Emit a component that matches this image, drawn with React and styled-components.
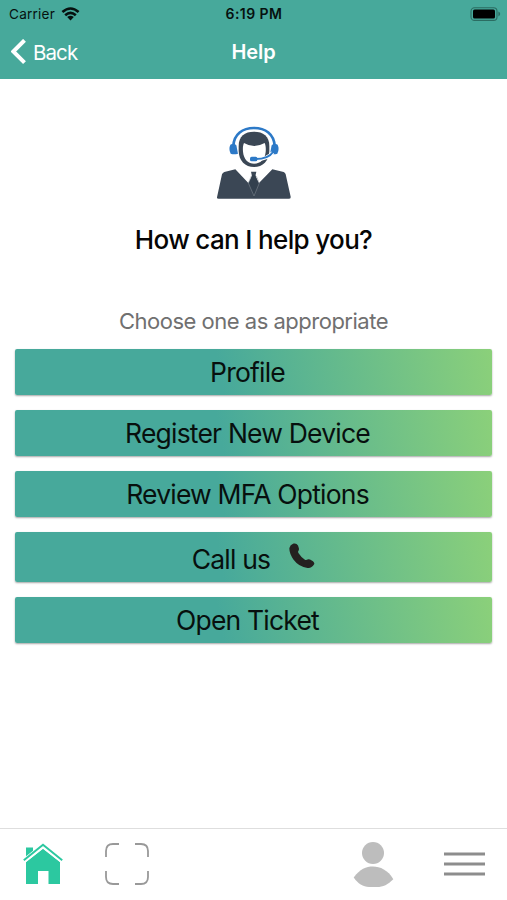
import React from 'react'
import styled, { createGlobalStyle } from 'styled-components'

const GlobalStyle = createGlobalStyle`
  * {
    box-sizing: border-box;
  }

  body {
    margin: 0;
    background: #fff;
    font-family: Inter, "Liberation Sans", sans-serif;
  }
`

const Screen = styled.div`
  display: flex;
  flex-direction: column;
  width: 507px;
  height: 900px;
  overflow: hidden;
`

const Header = styled.header`
  height: 79px;
  background: #47a99b;
`

const StatusBar = styled.div`
  display: grid;
  grid-template-columns: 1fr auto 1fr;
  align-items: center;
  height: 27px;
  padding: 0 6px 0 9px;
  color: #06110f;
  font-size: 13.6px;
`

const Carrier = styled.div`
  display: flex;
  align-items: center;
  gap: 6px;
  letter-spacing: 0.2px;
`

const Clock = styled.div`
  padding-right: 2px;
  font-size: 14px;
  font-weight: 600;
  letter-spacing: 0.45px;
`

const Battery = styled.svg`
  justify-self: end;
`

const NavBar = styled.nav`
  display: grid;
  grid-template-columns: 1fr auto 1fr;
  align-items: center;
  height: 50px;
  padding: 0 11px;
  color: #fff;
`

const BackButton = styled.a`
  display: flex;
  align-items: center;
  gap: 6px;
  height: 26px;
  font-size: 20.5px;
  letter-spacing: -0.9px;
`

const Title = styled.h1`
  margin: 0;
  font-size: 20px;
  font-weight: 600;
  letter-spacing: -0.1px;
`

const Main = styled.main`
  flex: 1;
  display: flex;
  flex-direction: column;
  align-items: center;
  padding: 47px 15px 0;
`

const Question = styled.h2`
  margin: 23px 0 0;
  color: #050505;
  font-size: 26px;
  font-weight: 450;
  line-height: 34px;
  letter-spacing: -0.65px;
`

const Hint = styled.p`
  margin: 50px 0 0;
  color: #707070;
  font-size: 22px;
  line-height: 28px;
  letter-spacing: -0.5px;
`

const Options = styled.div`
  display: flex;
  flex-direction: column;
  gap: 15px;
  width: 477px;
  margin-top: 14px;
`

const Option = styled.button`
  display: flex;
  align-items: center;
  justify-content: center;
  gap: 19px;
  height: ${props => props.$tall ? 50 : 46}px;
  padding: ${props => props.$tall ? '4px 0 0' : '0 12px 0 0'};
  border: 0;
  border-radius: 2px;
  background: linear-gradient(80deg, #47a99b 0%, #47a99b 43%, #8bd07a 100%);
  box-shadow: 0 1px 2px rgba(0, 0, 0, 0.35);
  color: #07100e;
  font-family: inherit;
  font-size: 26.5px;
  letter-spacing: ${props => props.$spacing || '-0.8px'};
`

const PhoneIcon = styled.svg`
  margin-top: -7px;
`

const TabBar = styled.footer`
  display: flex;
  align-items: center;
  height: 72px;
  padding: 0 22px 2px;
  border-top: 1px solid #dedede;
`

const Tab = styled.a`
  display: flex;
  margin-left: ${props => props.$left || 0}px;
`

function Agent() {
  return (
    <svg width="76" height="74" viewBox="66 48 228 222">
      <path d="M69 262L84 193Q86 188 91 186L124 178L163 219L174 199L171 185H187L184 199L195 219L235 178L269 186Q274 188 275 193L290 260Q291 266 284 266H74Q68 266 69 262Z" fill="#3b4755" />
      <path d="M174 196H184L194 221L180 262L165 221Z" fill="#33404e" />
      <path d="M180 258L163 219L172 198M180 258L196 219L187 198" fill="none" stroke="#8b939b" strokeWidth="1.5" />
      <path d="M134 108C134 78 152 65 180 65S226 78 226 108V122C226 152 206 171 180 171S134 152 134 122Z" fill="#3b4755" />
      <path d="M147 125C146 112 147 106 150 99Q180 117 212 99C215 106 216 112 215 126C213 148 199 161 181 161S149 148 147 125Z" fill="#fff" />
      <path d="M118 108C120 72 146 54 180 54S240 72 242 108" fill="none" stroke="#2c79c7" strokeWidth="8" />
      <path d="M109 104Q121 98 127 106L132 131Q120 135 110 131Q103 117 109 104Z" fill="#2c79c7" />
      <path d="M251 104Q239 98 233 106L228 131Q240 135 250 131Q257 117 251 104Z" fill="#2c79c7" />
      <path d="M236 128Q222 148 184 148" fill="none" stroke="#fff" strokeWidth="11" />
      <path d="M237 126Q224 147 184 147" fill="none" stroke="#2c79c7" strokeWidth="5.5" />
      <rect x="168" y="140" width="22" height="14" rx="5" fill="#2c79c7" />
    </svg>
  )
}

export default function App() {
  return (
    <>
      <GlobalStyle />
      <Screen>
        <Header>
          <StatusBar>
            <Carrier>
              Carrier
              <svg width="19" height="14" viewBox="0 0 19 14">
                <path d="M1.4 5Q9.5-2 17.6 5M4.2 8.2Q9.5 3.4 14.8 8.2" fill="none" stroke="#06110f" strokeWidth="2.6" />
                <path d="M6.2 10Q9.5 7.4 12.8 10L9.5 13.5Z" fill="#06110f" />
              </svg>
            </Carrier>
            <Clock>6:19 PM</Clock>
            <Battery width="31" height="14" viewBox="0 0 31 14">
              <rect x="1" y=".8" width="26" height="12.6" rx="3.5" fill="none" stroke="#2b6c62" strokeWidth="1.1" />
              <rect x="3" y="2.6" width="22" height="9" rx="1.6" fill="#000" />
              <path d="M28.4 4.6Q30.2 5.5 30.2 7T28.4 9.4Z" fill="#2b6c62" />
            </Battery>
          </StatusBar>
          <NavBar>
            <BackButton>
              <svg width="16" height="26" viewBox="0 0 16 26">
                <path d="M13.5 1.3L2.3 12.5L13.5 23.7" fill="none" stroke="#fff" strokeWidth="4" />
              </svg>
              Back
            </BackButton>
            <Title>Help</Title>
          </NavBar>
        </Header>

        <Main>
          <Agent />
          <Question>How can I help you?</Question>
          <Hint>Choose one as appropriate</Hint>
          <Options>
            <Option>Profile</Option>
            <Option>Register New Device</Option>
            <Option $spacing="-0.8px">Review MFA Options</Option>
            <Option $tall>
              Call us
              <PhoneIcon width="26" height="26" viewBox="0 0 26 26">
                <path d="M4.5.6Q7.4-.2 9 2.5L9.8 5Q10.3 7 9.2 8.2Q8.8 9 9.6 10.2Q11.8 13.8 15.6 16.4Q16.8 17.2 17.8 16.8Q19 15.8 21 16.6L24 18.2Q26 20 25 21.6Q22.5 25.6 18.5 25Q10 24 4.4 16.5Q0 10 .4 5Q1 2 4.5.6Z" fill="#24201f" />
              </PhoneIcon>
            </Option>
            <Option>Open Ticket</Option>
          </Options>
        </Main>

        <TabBar>
          <Tab>
            <svg width="42" height="42" viewBox="0 0 42 42">
              <path d="M4 4.5H11V9L4 15Z" fill="#2cc8a0" />
              <path d="M4 19L21 5.8L38 19V41H26.5V28H16V41H4Z" fill="#2cc8a0" />
              <path d="M2 17.8L21 2.8L40 17.8" fill="none" stroke="#fff" strokeWidth="4.6" />
              <path d="M1.8 17.2L21 1.8L40.2 17.2" fill="none" stroke="#2cc8a0" strokeWidth="2" />
            </svg>
          </Tab>
          <Tab $left={40}>
            <svg width="46" height="42" viewBox="0 0 46 42">
              <path d="M2 14V8Q2 1 9 1H15M31 1H37Q44 1 44 8V14M44 28V34Q44 41 37 41H31M15 41H9Q2 41 2 34V28" fill="none" stroke="#999" strokeWidth="1.8" />
            </svg>
          </Tab>
          <Tab $left={203}>
            <svg width="41" height="46" viewBox="0 0 41 46">
              <circle cx="20" cy="12" r="11" fill="#bdbdbd" />
              <path d="M.7 36.5C7 28 13 25.5 20 25.5S35 29 40.3 38.2C35 43.5 30 46 24 46H16C10 46 5 42.5.7 36.5Z" fill="#bdbdbd" />
            </svg>
          </Tab>
          <Tab $left={50}>
            <svg width="41" height="26" viewBox="0 0 41 26">
              <path d="M0 3H41M0 13H41M0 23H41" stroke="#8d8d8d" strokeWidth="3.2" />
            </svg>
          </Tab>
        </TabBar>
      </Screen>
    </>
  )
}
